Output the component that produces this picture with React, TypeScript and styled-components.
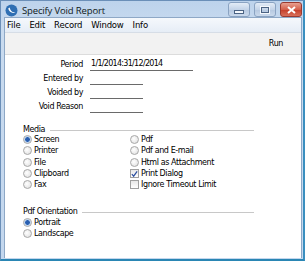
import React from "react";
import styled, { createGlobalStyle } from "styled-components";

const Global = createGlobalStyle`
  html, body {
    margin: 0;
    padding: 0;
    background: #ffffff;
  }
  body {
    font-family: "DejaVu Sans", sans-serif;
  }
`;

const App = () => {
  return (
    <>
      <Global />
      <Window>
        <TitleBar>
          <AppIcon>
            <svg width="13" height="13" viewBox="0 0 13 13">
              <circle cx="6.5" cy="6.5" r="6" fill="#2f6fb3" />
              <path d="M3.2 4.5 C4 8.5 8.5 10 10.5 8 C8 9 5.5 7.5 4.6 3.6 Z" fill="#ffffff" />
            </svg>
          </AppIcon>
          <Title>Specify Void Report</Title>
          <Controls>
            <CtrlButton>
              <MinGlyph />
            </CtrlButton>
            <CtrlButton>
              <MaxGlyph />
            </CtrlButton>
            <CloseButton>
              <svg width="9" height="8" viewBox="0 0 9 8">
                <path d="M1 1 L8 7 M8 1 L1 7" stroke="#ffffff" strokeWidth="2" />
              </svg>
            </CloseButton>
          </Controls>
        </TitleBar>
        <Client>
          <MenuBar>
            <MenuItem>File</MenuItem>
            <MenuItem>Edit</MenuItem>
            <MenuItem>Record</MenuItem>
            <MenuItem>Window</MenuItem>
            <MenuItem>Info</MenuItem>
          </MenuBar>
          <ToolBar>
            <ToolButton>Run</ToolButton>
          </ToolBar>
          <Form>
            <Fields>
              <Label>Period</Label>
              <Field $w={102}>1/1/2014:31/12/2014</Field>
              <Label>Entered by</Label>
              <Field $w={52} />
              <Label>Voided by</Label>
              <Field $w={52} />
              <Label>Void Reason</Label>
              <Field $w={52} />
            </Fields>

            <Group $top={9}>
              <GroupHead>
                <GroupTitle>Media</GroupTitle>
                <Rule />
              </GroupHead>
              <OptionGrid>
                <Option><Radio $on /> Screen</Option>
                <Option><Radio /> Pdf</Option>
                <Option><Radio /> Printer</Option>
                <Option><Radio /> Pdf and E-mail</Option>
                <Option><Radio /> File</Option>
                <Option><Radio /> Html as Attachment</Option>
                <Option><Radio /> Clipboard</Option>
                <Option>
                  <Check>
                    <svg width="8" height="8" viewBox="0 0 8 8">
                      <path d="M1 4.2 L3 6.5 L7 1" stroke="#2b4fa0" strokeWidth="1.4" fill="none" />
                    </svg>
                  </Check>
                  Print Dialog
                </Option>
                <Option><Radio /> Fax</Option>
                <Option><Check /> Ignore Timeout Limit</Option>
              </OptionGrid>
            </Group>

            <Group $top={16}>
              <GroupHead>
                <GroupTitle>Pdf Orientation</GroupTitle>
                <Rule />
              </GroupHead>
              <OptionGrid>
                <Option><Radio $on /> Portrait</Option>
                <span />
                <Option><Radio /> Landscape</Option>
              </OptionGrid>
            </Group>
          </Form>
        </Client>
      </Window>
    </>
  );
};

export default App;

const Window = styled.div`
  width: 305px;
  height: 261px;
  box-sizing: border-box;
  background: linear-gradient(#bdd3ec, #c9dbef 30px, #c3d7ee);
  border: 1px solid #6b8fb8;
  border-bottom: 2px solid #2a86b4;
  border-right: 2px solid #3a8fc0;
  display: flex;
  flex-direction: column;
  padding: 0 1px 1px 3px;
`;
const TitleBar = styled.div`
  height: 16px;
  display: flex;
  align-items: center;
  padding-left: 1px;
  flex: none;
`;
const AppIcon = styled.div`
  width: 13px;
  height: 13px;
  display: flex;
  margin-top: 2px;
`;
const Title = styled.div`
  font-family: "Open Sans", "DejaVu Sans", sans-serif;
  font-size: 9.5px;
  color: #101820;
  margin-left: 4px;
  margin-top: 3px;
  letter-spacing: -0.15px;
`;
const Controls = styled.div`
  margin-left: auto;
  display: flex;
  align-self: flex-start;
  gap: 4px;
  margin-top: 1px;
`;
const CtrlButton = styled.div`
  width: 20px;
  height: 13px;
  border: 1px solid #8aa3c2;
  border-radius: 3px;
  background: linear-gradient(#e3ecf7, #c4d4e8 50%, #b5c8e0 51%, #cbdaec);
  display: flex;
  align-items: center;
  justify-content: center;
`;
const CloseButton = styled(CtrlButton)`
  border-color: #9a3a30;
  background: linear-gradient(#e8a090, #d4604c 50%, #c43c28 51%, #d8705a);
`;
const MinGlyph = styled.div`
  width: 8px;
  height: 2px;
  background: #f4f8fc;
  border: 1px solid #4c6484;
  margin-top: 4px;
`;
const MaxGlyph = styled.div`
  width: 6px;
  height: 4px;
  border: 1px solid #4c6484;
  outline: 1px solid #f4f8fc;
`;
const Client = styled.div`
  flex: 1;
  display: flex;
  flex-direction: column;
  background: #ffffff;
  border: 1px solid #8ea8c6;
  border-bottom: none;
`;
const MenuBar = styled.div`
  height: 14px;
  display: flex;
  align-items: center;
  padding-left: 2px;
  background: linear-gradient(#f5f8fc, #e6edf6);
  border-bottom: 1px solid #d6dde6;
`;
const MenuItem = styled.div`
  font-size: 8.5px;
  color: #000000;
  margin-right: 9px;
  letter-spacing: -0.2px;
`;
const ToolBar = styled.div`
  height: 21px;
  display: flex;
  align-items: center;
  justify-content: flex-end;
  background: #f2f2f2;
  border-bottom: 1px solid #dcdcdc;
  padding-right: 18px;
`;
const ToolButton = styled.div`
  font-size: 8px;
  color: #000000;
  letter-spacing: -0.4px;
`;
const Form = styled.div`
  flex: 1;
  padding: 4px 0 0 18px;
  font-size: 8px;
  color: #000000;
  letter-spacing: -0.4px;
`;
const Fields = styled.div`
  display: grid;
  grid-template-columns: 60px auto;
  column-gap: 7px;
  grid-auto-rows: 14px;
  align-items: end;
`;
const Label = styled.div`
  text-align: right;
  line-height: 12px;
  padding-bottom: 2px;
`;
const Field = styled.div<{ $w: number }>`
  width: ${(p) => p.$w}px;
  height: 12px;
  line-height: 11px;
  border-bottom: 1px solid #6a6a6a;
  padding-left: 1px;
  letter-spacing: -0.7px;
  margin-bottom: 2px;
`;
const Group = styled.div<{ $top: number }>`
  margin-top: ${(p) => p.$top}px;
  width: 231px;
`;
const GroupHead = styled.div`
  display: flex;
  align-items: center;
  height: 10px;
`;
const GroupTitle = styled.div`
  margin-right: 5px;
`;
const Rule = styled.div`
  flex: 1;
  height: 1px;
  background: #c8c8c8;
  margin-top: 3px;
`;
const OptionGrid = styled.div`
  display: grid;
  grid-template-columns: 107px auto;
  grid-auto-rows: 11.3px;
  align-items: center;
`;
const Option = styled.div`
  display: flex;
  align-items: center;
  gap: 2px;
  white-space: nowrap;
`;
const Radio = styled.span<{ $on?: boolean }>`
  width: 9px;
  height: 9px;
  box-sizing: border-box;
  border-radius: 50%;
  border: 1px solid #a8a8a8;
  background: ${(p) =>
    p.$on
      ? "radial-gradient(circle, #2a5fb0 0 2px, #9dc0ea 2.5px, #e6eef8 3.5px)"
      : "radial-gradient(circle at 40% 40%, #ffffff, #dcdcdc)"};
  flex: none;
`;
const Check = styled.span`
  width: 9px;
  height: 9px;
  box-sizing: border-box;
  border: 1px solid #a0a0a0;
  background: linear-gradient(#e8e8e8, #ffffff);
  display: flex;
  align-items: center;
  justify-content: center;
  flex: none;
`;
